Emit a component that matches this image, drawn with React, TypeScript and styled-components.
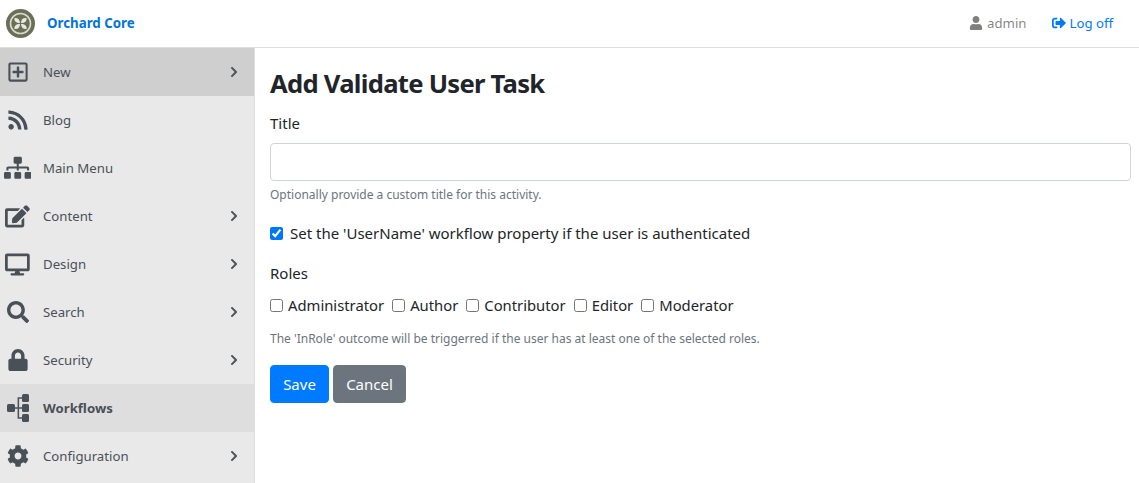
import React from "react";
import styled, { createGlobalStyle } from "styled-components";
import {
  FaRegPlusSquare,
  FaRss,
  FaSitemap,
  FaEdit,
  FaDesktop,
  FaSearch,
  FaLock,
  FaCog,
  FaChevronRight,
  FaUser,
  FaSignOutAlt,
} from "react-icons/fa";

const GlobalStyle = createGlobalStyle`
  html, body {
    margin: 0;
    height: 100%;
    overflow: hidden;
    background: #fff;
    font-family: "Noto Sans", "Open Sans", sans-serif;
    color: #212529;
  }
  * { box-sizing: border-box; }
`;

const Page = styled.div`
  height: 100vh;
  display: flex;
  flex-direction: column;
`;

const TopBar = styled.header`
  height: 48px;
  flex: none;
  display: flex;
  align-items: center;
  justify-content: space-between;
  padding: 0 26px 1px 6px;
  border-bottom: 1px solid #dedede;
`;

const Brand = styled.a`
  display: flex;
  align-items: center;
  gap: 12px;
  color: #0275d8;
  font-size: 13.3px;
  font-weight: 700;
`;

const TopActions = styled.div`
  display: flex;
  align-items: center;
  gap: 25px;
  font-size: 13.2px;
`;

const TopAction = styled.a<{ $color: string }>`
  display: flex;
  align-items: center;
  gap: 4px;
  color: ${(p) => p.$color};
  svg { font-size: 14px; }
`;

const Body = styled.div`
  flex: 1;
  display: flex;
  min-height: 0;
`;

const Sidebar = styled.nav`
  width: 255px;
  flex: none;
  background: #e9e9e9;
  border-right: 1px solid #dedede;
  overflow: hidden;
`;

const MenuItem = styled.div<{ $bg?: string; $bold?: boolean }>`
  height: 48px;
  display: flex;
  align-items: center;
  padding: 0 14px 0 0;
  background: ${(p) => p.$bg ?? "transparent"};
  color: #495057;
  font-size: 13.2px;
  font-weight: ${(p) => (p.$bold ? 700 : 400)};
`;

const MenuIcon = styled.span`
  width: 35px;
  margin-right: 8px;
  flex: none;
  display: flex;
  justify-content: center;
  color: #495057;
  svg { display: block; flex: none; }
`;

const MenuLabel = styled.span`
  flex: 1;
`;

const Chevron = styled(FaChevronRight)`
  font-size: 12px;
  color: #495057;
`;

const Main = styled.main`
  flex: 1;
  padding: 18px 8px 0 15px;
`;

const Title = styled.h1`
  margin: 0 0 9px;
  font-size: 25.6px;
  line-height: 36px;
  font-weight: 700;
  letter-spacing: -0.72px;
`;

const FieldLabel = styled.label`
  display: block;
  font-size: 15px;
  line-height: 24px;
  margin-bottom: 8px;
`;

const TextInput = styled.input`
  display: block;
  width: 100%;
  height: 38px;
  border: 1px solid #ced4da;
  border-radius: 4px;
  background: #fff;
`;

const Hint = styled.div`
  font-size: 12px;
  line-height: 18px;
  color: #6c757d;
`;

const CheckRow = styled.label`
  display: flex;
  align-items: center;
  gap: 7px;
  height: 24px;
  font-size: 15px;
`;

const Check = styled.input`
  width: 13px;
  height: 13px;
  margin: 0;
`;

const RoleRow = styled.div`
  display: flex;
  gap: 8px;
  height: 24px;
  margin-top: 2px;
  align-items: center;
  font-size: 14.8px;
`;

const Role = styled.label`
  display: flex;
  align-items: center;
  gap: 5px;
`;

const Buttons = styled.div`
  display: flex;
  gap: 4px;
  margin-top: 17px;
`;

const Button = styled.button<{ $bg: string; $width: number }>`
  width: ${(p) => p.$width}px;
  height: 38px;
  padding: 0;
  border: 1px solid ${(p) => p.$bg};
  border-radius: 4px;
  background: ${(p) => p.$bg};
  color: #fff;
  font: inherit;
  font-size: 15px;
`;

const Section = styled.div<{ $top: number }>`
  margin-top: ${(p) => p.$top}px;
`;

const Logo = () => (
  <svg width="29" height="29" viewBox="0 0 29 29">
    <circle cx="14.5" cy="14.5" r="14.5" fill="#6b6f57" />
    <circle cx="14.5" cy="14.5" r="10" fill="none" stroke="#d8d9cf" strokeWidth="1.6" />
    <path d="M14 14C10 14 8 12 8.5 9c3-.5 5.5 1.500 5.500 5z" fill="#e8e8e0" />
    <path d="M15 14c0-3.500 2-5.500 5.500-5 .5 3-1.500 5-5.500 5z" fill="#e8e8e0" />
    <path d="M14 15c0 3.500-2 5.500-5.500 5-.5-3 1.500-5 5.500-5z" fill="#e8e8e0" />
    <path d="M15 15c4 0 6 2 5.500 5-3 .5-5.500-1.500-5.500-5z" fill="#e8e8e0" />
  </svg>
);

const WorkflowIcon = () => (
  <svg width="22" height="28" viewBox="0 0 22 28" fill="#495057">
    <rect x="0" y="10" width="8" height="8" rx="1.500" />
    <rect x="15" y="0" width="7" height="8" rx="1.500" />
    <rect x="15" y="10" width="7" height="8" rx="1.500" />
    <rect x="15" y="20" width="7" height="8" rx="1.500" />
    <path d="M8 13.300h2.600V3.300H15v1.400h-2.900v8.600H15v1.400h-2.900v8.600H15v1.400h-4.400V14.700H8z" />
  </svg>
);

const menu = [
  { label: "New", icon: <FaRegPlusSquare size={22} />, arrow: true, bg: "#cfcfcf" },
  { label: "Blog", icon: <FaRss size={22} /> },
  { label: "Main Menu", icon: <FaSitemap size={27.5} /> },
  { label: "Content", icon: <FaEdit size={24.75} />, arrow: true },
  { label: "Design", icon: <FaDesktop size={24.75} />, arrow: true },
  { label: "Search", icon: <FaSearch size={22} />, arrow: true },
  { label: "Security", icon: <FaLock size={22} />, arrow: true },
  { label: "Workflows", icon: <WorkflowIcon />, bg: "#dedede", bold: true },
  { label: "Configuration", icon: <FaCog size={22} />, arrow: true },
];

const roles = ["Administrator", "Author", "Contributor", "Editor", "Moderator"];

const App = () => {
  return (
    <Page>
      <GlobalStyle />
      <TopBar>
        <Brand>
          <Logo />
          Orchard Core
        </Brand>
        <TopActions>
          <TopAction $color="rgba(0, 0, 0, 0.5)">
            <FaUser />
            admin
          </TopAction>
          <TopAction $color="#007bff">
            <FaSignOutAlt />
            Log off
          </TopAction>
        </TopActions>
      </TopBar>
      <Body>
        <Sidebar>
          {menu.map((item) => (
            <MenuItem key={item.label} $bg={item.bg} $bold={item.bold}>
              <MenuIcon>{item.icon}</MenuIcon>
              <MenuLabel>{item.label}</MenuLabel>
              {item.arrow && <Chevron />}
            </MenuItem>
          ))}
        </Sidebar>
        <Main>
          <Title>Add Validate User Task</Title>
          <FieldLabel>Title</FieldLabel>
          <TextInput type="text" />
          <Section $top={5}>
            <Hint>Optionally provide a custom title for this activity.</Hint>
          </Section>
          <Section $top={17}>
            <CheckRow>
              <Check type="checkbox" defaultChecked />
              Set the 'UserName' workflow property if the user is authenticated
            </CheckRow>
          </Section>
          <Section $top={16}>
            <FieldLabel>Roles</FieldLabel>
          </Section>
          <RoleRow>
            {roles.map((r) => (
              <Role key={r}>
                <Check type="checkbox" />
                {r}
              </Role>
            ))}
          </RoleRow>
          <Section $top={13}>
            <Hint>The 'InRole' outcome will be triggerred if the user has at least one of the selected roles.</Hint>
          </Section>
          <Buttons>
            <Button $bg="#007bff" $width={59}>Save</Button>
            <Button $bg="#6c757d" $width={73}>Cancel</Button>
          </Buttons>
        </Main>
      </Body>
    </Page>
  );
};

export default App;
